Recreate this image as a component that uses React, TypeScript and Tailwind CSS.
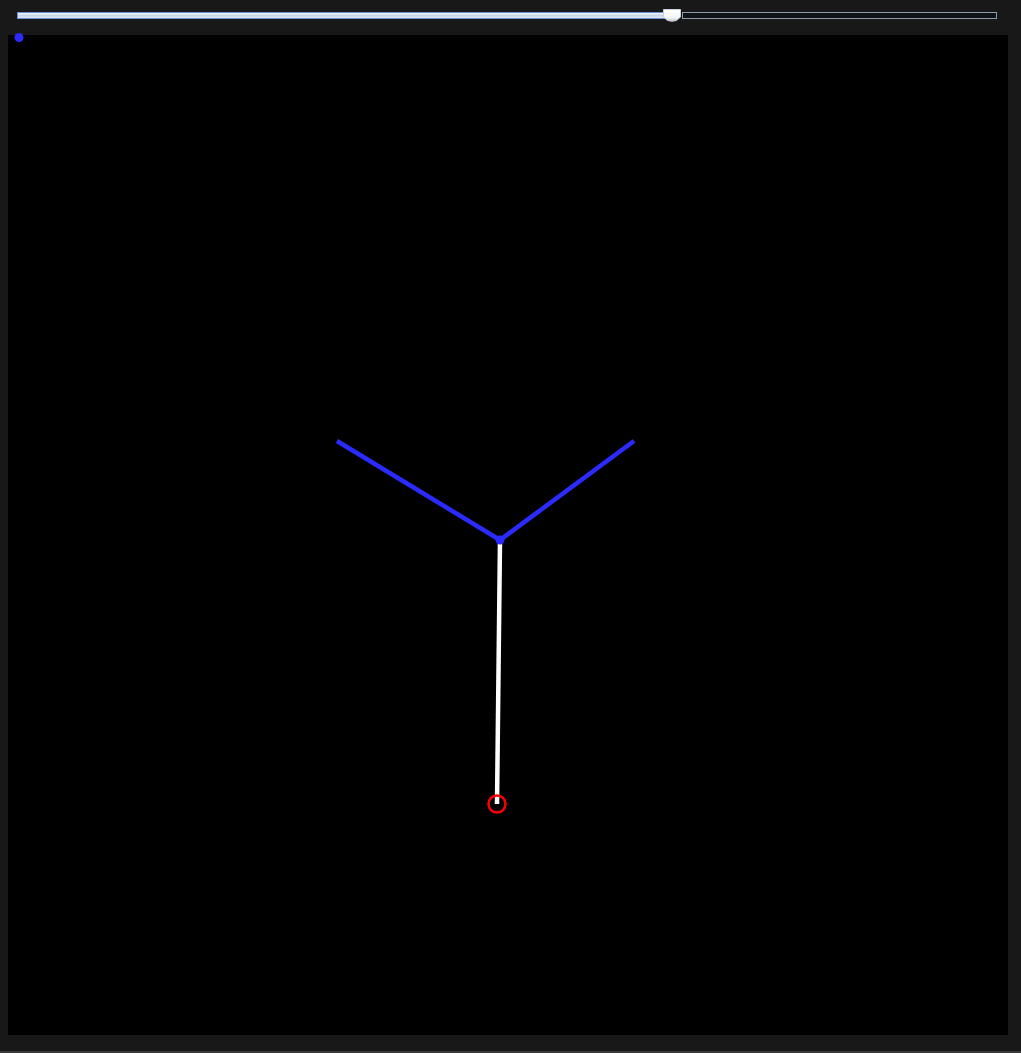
import React from "react";

export default function App() {
  return (
    <div className="w-[1021px] h-[1053px] bg-[#181818] flex flex-col overflow-hidden relative">
      <div className="h-[35px] pt-[12px] pl-[17px] pr-[24px]">
        <div className="relative flex items-center h-[7px]">
          <div className="w-[648px] h-[7px] border border-[#6a8fd8] bg-gradient-to-b from-[#f4f8ff] via-[#c9d6e6] to-[#dfe8f2]" />
          <div className="w-[17px] h-[7px]" />
          <div className="flex-1 h-[7px] border border-[#8c9cab] bg-[#0f1216]" />
          <svg className="absolute left-[646px] top-[-3px]" width="18" height="13" viewBox="0 0 18 13">
            <defs>
              <linearGradient id="tg" x1="0" y1="0" x2="0" y2="1">
                <stop offset="0" stopColor="#ffffff" />
                <stop offset="0.7" stopColor="#f2f5f8" />
                <stop offset="1" stopColor="#b9c3cc" />
              </linearGradient>
            </defs>
            <path d="M0.5 0.5 H17.5 V8 L13.5 11.5 Q9 13 4.5 11.5 L0.5 8 Z" fill="url(#tg)" stroke="#c8d0d8" strokeWidth="1" />
          </svg>
        </div>
      </div>
      <div className="ml-[8px] w-[1000px] h-[1000px] bg-black relative">
        <svg width="1000" height="1000" viewBox="0 0 1000 1000" className="absolute left-0 top-0 overflow-visible">
          <line x1="492" y1="505" x2="329" y2="406" stroke="#2b2bff" strokeWidth="4.5" />
          <line x1="492" y1="505" x2="626" y2="406" stroke="#2b2bff" strokeWidth="4.5" />
          <line x1="492" y1="505" x2="489" y2="769" stroke="#ffffff" strokeWidth="4.5" />
          <circle cx="492" cy="505" r="4.5" fill="#2b2bff" />
          <circle cx="489" cy="769" r="8.5" fill="none" stroke="#ff0000" strokeWidth="2.5" />
          <circle cx="11" cy="2.5" r="4.5" fill="#2b2bff" />
        </svg>
      </div>
      <div className="flex-1" />
      <div className="h-[2px] bg-[#3a3a3a]" />
    </div>
  );
}
